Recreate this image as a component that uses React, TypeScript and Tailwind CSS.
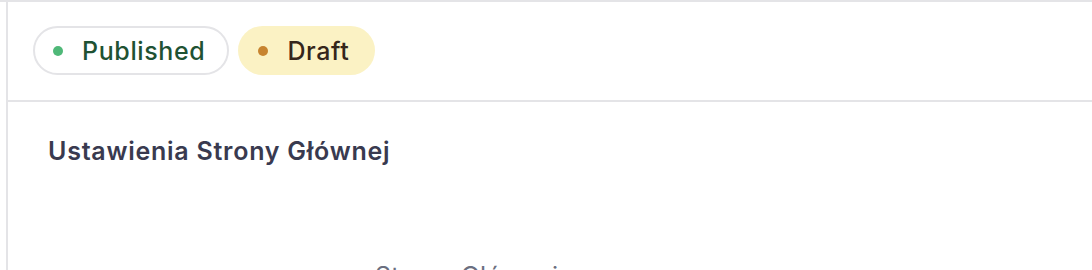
export default function App() {
  return (
    <div
      className="w-[1092px] h-[270px] overflow-hidden bg-white border-t-2 border-[#e4e4e7] flex tracking-[0.02em]"
      style={{ fontFamily: "Inter, 'Noto Sans', sans-serif" }}
    >
      {/* gutter */}
      <div className="w-[6px] shrink-0" />

      <div className="flex-1 border-l-2 border-[#e4e4e7] flex flex-col">
        {/* Status tabs */}
        <div className="flex items-start gap-[9px] pl-[25px] pt-[24px] pb-[25px] border-b-2 border-[#e4e4e7]">
          <div className="h-[49px] flex items-center gap-[19px] pl-[18px] pr-[22px] rounded-full border-2 border-[#e4e4e7] bg-white">
            <span className="w-[10px] h-[10px] rounded-full bg-[#4fb878]" />
            <span className="text-[25px] leading-[32px] font-medium tracking-[0.025em] text-[#1f5233]">
              Published
            </span>
          </div>
          <div className="h-[49px] flex items-center gap-[19px] pl-[18px] pr-[24px] rounded-full border-2 border-transparent bg-[#fbf2c4]">
            <span className="w-[10px] h-[10px] rounded-full bg-[#c7842f]" />
            <span className="text-[25px] leading-[32px] font-medium tracking-[0.025em] text-[#35261a]">
              Draft
            </span>
          </div>
        </div>

        {/* Content */}
        <div className="pl-[40px] pt-[33px]">
          <h2 className="text-[25px] leading-[32px] font-semibold tracking-[0.03em] text-[#393a4f]">
            Ustawienia Strony Głównej
          </h2>
          <p className="mt-[93px] ml-[327px] text-[25px] leading-[32px] text-[#6b6f80]">
            Strony Głównej
          </p>
        </div>
      </div>
    </div>
  );
}
